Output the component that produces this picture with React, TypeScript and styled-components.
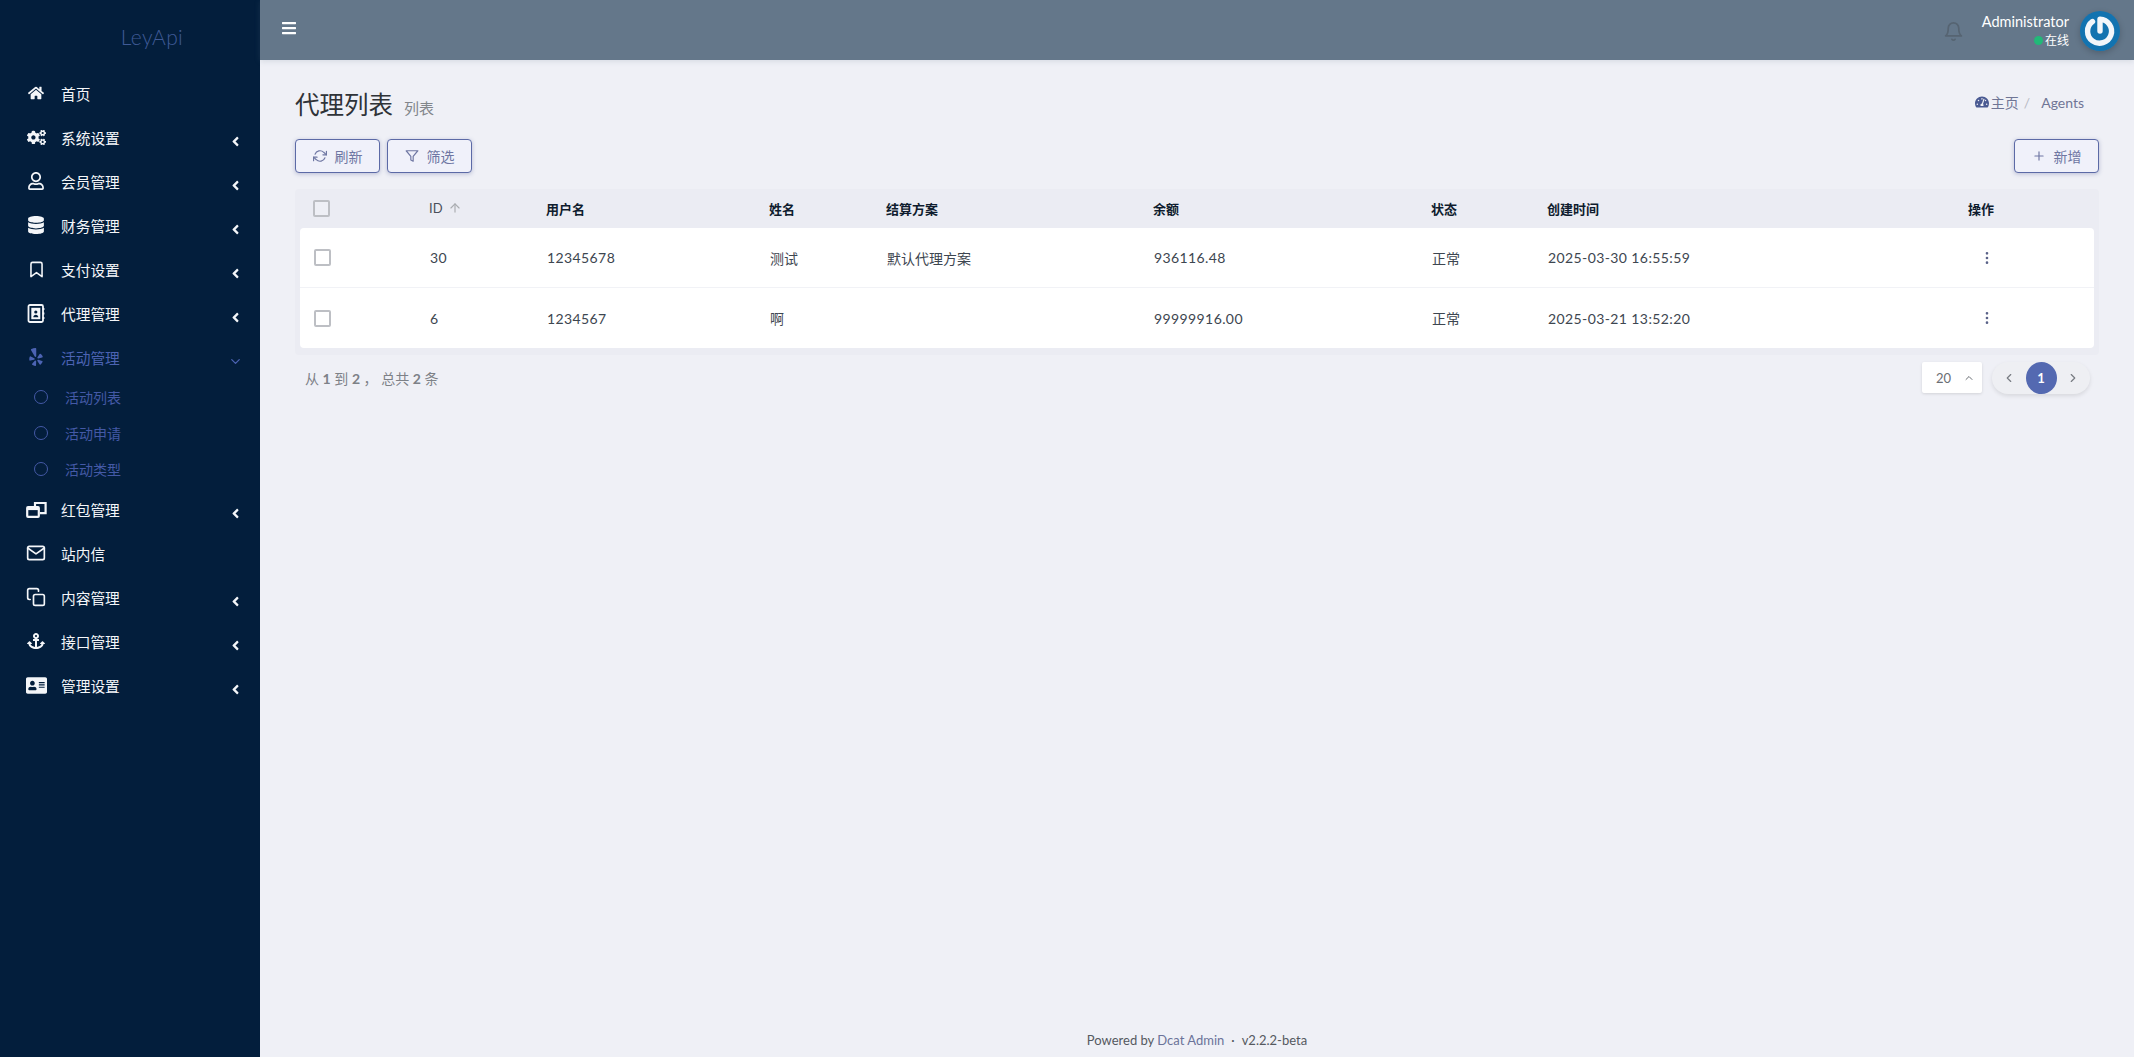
import React from "react";
import styled, { createGlobalStyle } from "styled-components";
import {
  FaHome,
  FaCogs,
  FaDatabase,
  FaYelp,
  FaRegUser,
  FaAnchor,
  FaAddressCard,
  FaTachometerAlt,
  FaBars,
  FaAngleLeft,
} from "react-icons/fa";
import {
  FiBookmark,
  FiMail,
  FiCopy,
  FiBell,
  FiRefreshCw,
  FiFilter,
  FiPlus,
  FiMoreVertical,
  FiChevronDown,
  FiChevronUp,
  FiChevronLeft,
  FiChevronRight,
  FiArrowUp,
} from "react-icons/fi";

const FONT = `Lato, "Noto Sans CJK SC", sans-serif`;
const SIDEBAR_BG = "#031e3c";

const GlobalStyle = createGlobalStyle`
  html, body {
    margin: 0;
    height: 100%;
    background: #eff0f6;
    font-family: ${FONT};
    font-size: 14px;
    color: #414750;
  }
  #root { height: 100%; }
  * { box-sizing: border-box; }
`;

function AgentIcon() {
  return (
    <svg viewBox="0 0 18 19" fill="none">
      <rect x="1" y="1" width="14.5" height="17" rx="1.5" stroke="currentColor" strokeWidth="1.8" />
      <path d="M16 4v2M16 8.5v2M16 13v2" stroke="currentColor" strokeWidth="1.8" />
      <rect x="3.8" y="3.8" width="9" height="11.4" fill="currentColor" />
      <circle cx="8.3" cy="8" r="1.6" fill={SIDEBAR_BG} />
      <path d="M5.8 13.2c0-1.6 1.1-2.5 2.5-2.5s2.5 .9 2.5 2.5z" fill={SIDEBAR_BG} />
    </svg>
  );
}

function PacketIcon() {
  return (
    <svg viewBox="0 0 21 17" fill="none" stroke="currentColor" strokeWidth="2.2">
      <path d="M9 6V2h10.6v10.2H14" />
      <rect x="1.2" y="6.2" width="11.6" height="9.6" rx="0.8" />
      <path d="M1.2 7.6h11.6" strokeWidth="3" />
    </svg>
  );
}

const menu = [
  { icon: <FaHome />, size: 16, label: "首页" },
  { icon: <FaCogs />, size: 19, label: "系统设置", arrow: true },
  { icon: <FaRegUser />, size: 18, label: "会员管理", arrow: true },
  { icon: <FaDatabase />, size: 18, label: "财务管理", arrow: true },
  { icon: <FiBookmark />, size: 19, label: "支付设置", arrow: true },
  { icon: <AgentIcon />, size: 19, label: "代理管理", arrow: true },
  { icon: <FaYelp />, size: 18, label: "活动管理", open: true, children: ["活动列表", "活动申请", "活动类型"] },
  { icon: <PacketIcon />, size: 21, label: "红包管理", arrow: true },
  { icon: <FiMail />, size: 20, label: "站内信" },
  { icon: <FiCopy />, size: 20, label: "内容管理", arrow: true },
  { icon: <FaAnchor />, size: 18, label: "接口管理", arrow: true },
  { icon: <FaAddressCard />, size: 21, label: "管理设置", arrow: true },
];

const rows = [
  { id: "30", user: "12345678", name: "测试", plan: "默认代理方案", balance: "936116.48", status: "正常", time: "2025-03-30 16:55:59" },
  { id: "6", user: "1234567", name: "啊", plan: "", balance: "99999916.00", status: "正常", time: "2025-03-21 13:52:20" },
];

export default function App() {
  return (
    <Page>
      <GlobalStyle />
      <Sidebar>
        <Logo>LeyApi</Logo>
        <Nav>
          {menu.map((item) => (
            <React.Fragment key={item.label}>
              <NavItem $active={item.open}>
                <NavIcon $size={item.size}>{item.icon}</NavIcon>
                <NavLabel>{item.label}</NavLabel>
                {item.arrow && (
                  <NavArrow>
                    <FaAngleLeft />
                  </NavArrow>
                )}
                {item.open && (
                  <NavArrow>
                    <FiChevronDown />
                  </NavArrow>
                )}
              </NavItem>
              {item.children?.map((child) => (
                <SubItem key={child}>
                  <SubDot />
                  {child}
                </SubItem>
              ))}
            </React.Fragment>
          ))}
        </Nav>
      </Sidebar>

      <Main>
        <Topbar>
          <Burger>
            <FaBars />
          </Burger>
          <UserArea>
            <Bell>
              <FiBell />
            </Bell>
            <UserText>
              <UserName>Administrator</UserName>
              <UserStatus>
                <OnlineDot />
                在线
              </UserStatus>
            </UserText>
            <Avatar>
              <svg viewBox="0 0 40 40" width="40" height="40">
                <circle cx="20" cy="20" r="20" fill="#1273b0" />
                <path
                  d="M12.5 10.5 A12 12 0 1 0 20 8.2 V20"
                  fill="none"
                  stroke="#f2f6fa"
                  strokeWidth="5.4"
                  strokeLinecap="round"
                  strokeLinejoin="round"
                />
              </svg>
            </Avatar>
          </UserArea>
        </Topbar>

        <Content>
          <TitleRow>
            <TitleGroup>
              <Title>代理列表</Title>
              <Subtitle>列表</Subtitle>
            </TitleGroup>
            <Breadcrumb>
              <FaTachometerAlt />
              <span>主页</span>
              <Slash>/</Slash>
              <span>Agents</span>
            </Breadcrumb>
          </TitleRow>

          <Toolbar>
            <ToolGroup>
              <ToolButton>
                <FiRefreshCw />
                刷新
              </ToolButton>
              <ToolButton>
                <FiFilter />
                筛选
              </ToolButton>
            </ToolGroup>
            <ToolButton>
              <FiPlus />
              新增
            </ToolButton>
          </Toolbar>

          <TableWrap>
            <HeadRow>
              <HeadCell>
                <Check $head />
              </HeadCell>
              <HeadCell $thin>
                ID
                <SortIcon>
                  <FiArrowUp />
                </SortIcon>
              </HeadCell>
              <HeadCell>用户名</HeadCell>
              <HeadCell>姓名</HeadCell>
              <HeadCell>结算方案</HeadCell>
              <HeadCell>余额</HeadCell>
              <HeadCell>状态</HeadCell>
              <HeadCell>创建时间</HeadCell>
              <HeadCell $action>操作</HeadCell>
            </HeadRow>
            <Body>
              {rows.map((r) => (
                <Row key={r.id}>
                  <Cell>
                    <Check />
                  </Cell>
                  <Cell $num>{r.id}</Cell>
                  <Cell $num>{r.user}</Cell>
                  <Cell>{r.name}</Cell>
                  <Cell>{r.plan}</Cell>
                  <Cell $num>{r.balance}</Cell>
                  <Cell>{r.status}</Cell>
                  <Cell $num>{r.time}</Cell>
                  <Cell $action>
                    <MoreIcon>
                      <FiMoreVertical />
                    </MoreIcon>
                  </Cell>
                </Row>
              ))}
            </Body>
          </TableWrap>

          <TableFoot>
            <Summary>
              从 <b>1</b> 到 <b>2</b> ， 总共 <b>2</b> 条
            </Summary>
            <PagerGroup>
              <PerPage>
                20
                <FiChevronUp />
              </PerPage>
              <Pager>
                <PagerArrow>
                  <FiChevronLeft />
                </PagerArrow>
                <PagerCurrent>1</PagerCurrent>
                <PagerArrow>
                  <FiChevronRight />
                </PagerArrow>
              </Pager>
            </PagerGroup>
          </TableFoot>
        </Content>

        <Footer>
          Powered by <FooterLink>Dcat Admin</FooterLink>
          <FooterDot>·</FooterDot>
          v2.2.2-beta
        </Footer>
      </Main>
    </Page>
  );
}

const Page = styled.div`
  display: flex;
  height: 1057px;
  overflow: hidden;
`;

const Sidebar = styled.aside`
  flex: 0 0 260px;
  background: ${SIDEBAR_BG};
  display: flex;
  flex-direction: column;
`;

const Logo = styled.div`
  height: 71px;
  padding: 22px 0 0 44px;
  text-align: center;
  font-size: 21px;
  font-weight: 300;
  line-height: 30px;
  letter-spacing: 0.4px;
  color: #3f5a96;
`;

const Nav = styled.nav`
  display: flex;
  flex-direction: column;
`;

const NavItem = styled.div<{ $active?: boolean }>`
  height: 44px;
  display: flex;
  align-items: center;
  padding: 0 17px 0 24px;
  font-size: 14.7px;
  color: ${(p) => (p.$active ? "#4c63b3" : "#f4f6f9")};
`;

const NavIcon = styled.span<{ $size: number }>`
  flex: 0 0 24px;
  height: 24px;
  margin-right: 13px;
  display: flex;
  align-items: center;
  justify-content: center;

  svg {
    display: block;
    width: ${(p) => p.$size}px;
    height: ${(p) => p.$size}px;
  }
`;

const NavLabel = styled.span`
  flex: 1;
`;

const NavArrow = styled.span`
  display: flex;
  align-items: center;
  margin-top: 8px;
  font-size: 15px;
`;

const SubItem = styled.div`
  height: 36px;
  display: flex;
  align-items: center;
  gap: 17px;
  padding-left: 34px;
  color: #4459a6;
  font-size: 14px;
`;

const SubDot = styled.span`
  width: 14px;
  height: 14px;
  border: 1px solid #4459a6;
  border-radius: 50%;
`;

const Main = styled.div`
  flex: 1;
  min-width: 0;
  display: flex;
  flex-direction: column;
`;

const Topbar = styled.header`
  height: 60px;
  flex: 0 0 60px;
  background: #64778a;
  display: flex;
  align-items: flex-start;
  justify-content: space-between;
  padding: 0 14px 0 21px;
  box-shadow: 0 1px 6px rgba(100, 119, 138, 0.2);
`;

const Burger = styled.div`
  margin-top: 20px;
  color: #fff;
  font-size: 16px;
  line-height: 0;
`;

const UserArea = styled.div`
  display: flex;
  align-items: center;
  margin-top: 11px;
`;

const Bell = styled.div`
  color: #566472;
  font-size: 21px;
  line-height: 0;
  margin-right: 18px;
`;

const UserText = styled.div`
  display: flex;
  flex-direction: column;
  align-items: flex-end;
  margin-right: 11px;
  color: #fff;
`;

const UserName = styled.div`
  font-size: 14.5px;
  line-height: 19px;
`;

const UserStatus = styled.div`
  display: flex;
  align-items: center;
  gap: 2px;
  font-size: 12px;
  line-height: 19px;
`;

const OnlineDot = styled.span`
  width: 9px;
  height: 9px;
  border-radius: 50%;
  background: #21b978;
`;

const Avatar = styled.div`
  width: 40px;
  height: 40px;
  line-height: 0;
  border-radius: 50%;
  box-shadow: 0 2px 6px rgba(0, 0, 0, 0.2);
`;

const Content = styled.main`
  flex: 1;
  padding: 0 35px 0 35px;
`;

const TitleRow = styled.div`
  height: 79px;
  display: flex;
  align-items: flex-start;
  justify-content: space-between;
  padding-top: 28px;
`;

const TitleGroup = styled.div`
  display: flex;
  align-items: baseline;
  gap: 11px;
`;

const Title = styled.h1`
  margin: 0;
  font-size: 24.5px;
  font-weight: 400;
  line-height: 34px;
  color: #2f3338;
`;

const Subtitle = styled.small`
  font-size: 15px;
  color: #82868b;
`;

const Breadcrumb = styled.div`
  display: flex;
  align-items: center;
  gap: 5px;
  margin-top: 4px;
  margin-right: 15px;
  font-size: 14px;
  color: #6f7595;

  svg {
    color: #4a5a92;
    font-size: 14px;
    margin-right: -3px;
  }
`;

const Slash = styled.span`
  margin: 0 6px 0 0;
  color: #b8bac4;
`;

const Toolbar = styled.div`
  display: flex;
  justify-content: space-between;
`;

const ToolGroup = styled.div`
  display: flex;
  gap: 7px;
`;

const ToolButton = styled.button`
  height: 34px;
  padding: 0 16.5px;
  display: flex;
  align-items: center;
  gap: 8px;
  border: 1px solid #5c6aa6;
  border-radius: 4px;
  background: #f0f1fa;
  box-shadow: 0 1px 4px rgba(80, 90, 150, 0.35);
  font-family: ${FONT};
  font-size: 14px;
  color: #6f77a3;

  svg {
    font-size: 14px;
  }
`;

const COLUMNS = "116px 117px 223px 117px 267px 278px 116px 421px 1fr";

const TableWrap = styled.div`
  margin-top: 16px;
  padding: 0 5px 7px;
  background: #ebecf3;
  border-radius: 4px;
`;

const HeadRow = styled.div`
  height: 39px;
  padding-bottom: 1px;
  display: grid;
  grid-template-columns: ${COLUMNS};
  align-items: center;
`;

const HeadCell = styled.div<{ $thin?: boolean }>`
  display: flex;
  align-items: center;
  padding-left: 13px;
  font-size: 13px;
  font-weight: ${(p) => (p.$thin ? 400 : 700)};
  color: ${(p) => (p.$thin ? "#4a4f5a" : "#0f1c2e")};
`;

const Body = styled.div`
  background: #fff;
  border-radius: 4px;
`;

const Row = styled.div`
  height: 60px;
  display: grid;
  grid-template-columns: ${COLUMNS};
  align-items: center;
  border-bottom: 1px solid #f1f2f6;

  &:last-child {
    border-bottom: 0;
  }
`;

const Cell = styled.div<{ $num?: boolean; $action?: boolean }>`
  padding-left: ${(p) => (p.$action ? "24px" : "14px")};
  letter-spacing: ${(p) => (p.$num ? "0.4px" : "0")};
  font-size: 14px;
  color: #3d4650;
`;

const Check = styled.span<{ $head?: boolean }>`
  display: block;
  width: 17px;
  height: 17px;
  border: 2px solid #bdbfc4;
  border-radius: 2px;
  background: ${(p) => (p.$head ? "#eeeff5" : "#fff")};
`;

const SortIcon = styled.span`
  display: flex;
  margin-left: 5px;
  color: #a9acb0;
  font-size: 14px;
`;

const MoreIcon = styled.span`
  display: flex;
  color: #5a6288;
  font-size: 16px;
`;

const TableFoot = styled.div`
  display: flex;
  justify-content: space-between;
  align-items: flex-start;
  padding: 7px 9px 0 10px;
`;

const Summary = styled.div`
  margin-top: 6px;
  font-size: 14px;
  color: #7d8187;

  b {
    font-weight: 700;
  }
`;

const PagerGroup = styled.div`
  display: flex;
  align-items: flex-start;
  gap: 10px;
`;

const PerPage = styled.div`
  width: 60px;
  height: 31px;
  padding: 0 7px 0 14px;
  display: flex;
  align-items: center;
  justify-content: space-between;
  background: #fff;
  border-radius: 2px;
  box-shadow: 0 1px 3px rgba(0, 0, 0, 0.12);
  font-size: 13px;
  color: #6a6e74;

  svg {
    font-size: 12px;
  }
`;

const Pager = styled.div`
  width: 98px;
  height: 32px;
  padding: 0 10px;
  display: flex;
  align-items: center;
  justify-content: space-between;
  background: #eeeff3;
  border-radius: 16px;
  box-shadow: 0 2px 4px rgba(0, 0, 0, 0.1);
`;

const PagerArrow = styled.span`
  display: flex;
  color: #777b82;
  font-size: 14px;
`;

const PagerCurrent = styled.span`
  width: 31px;
  height: 32px;
  border-radius: 50%;
  background: #5469b1;
  color: #fff;
  font-weight: 700;
  font-size: 13px;
  display: flex;
  align-items: center;
  justify-content: center;
`;

const Footer = styled.footer`
  height: 27px;
  flex: 0 0 27px;
  text-align: center;
  font-size: 13px;
  line-height: 20px;
  color: #55595f;
`;

const FooterLink = styled.span`
  color: #6b7399;
`;

const FooterDot = styled.span`
  margin: 0 7px;
`;
